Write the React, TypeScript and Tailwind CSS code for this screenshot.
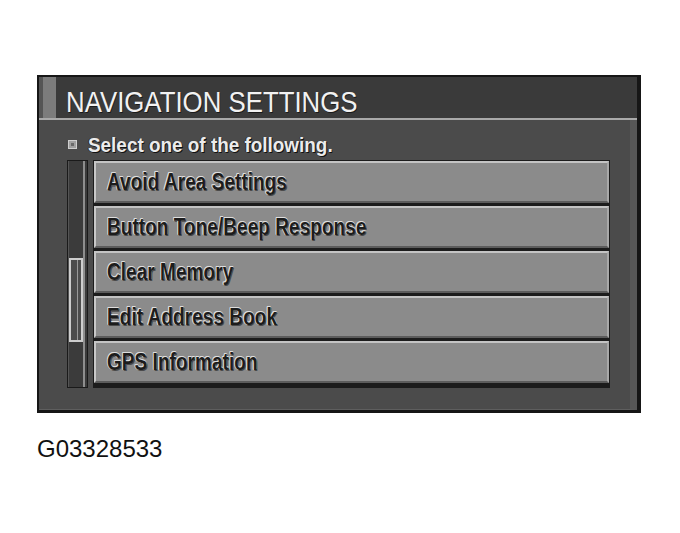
import React from 'react';

const items = [
  'Avoid Area Settings',
  'Button Tone/Beep Response',
  'Clear Memory',
  'Edit Address Book',
  'GPS Information',
];

// dark label with a light emboss edge, as drawn on the head unit
const embossed =
  '[text-shadow:-1px_-1px_0_#dedede,-1px_0_0_#dedede,0_-1px_0_#dedede,1px_1px_0_#4a4a4a]';

const MenuButton = ({ label }: { label: string }) => (
  <div className="h-[42px] flex items-center bg-[#8b8b8b] border-t-2 border-l-2 border-t-[#c4c4c4] border-l-[#c8c8c8] border-b-2 border-r-2 border-b-[#5c5c5c] border-r-[#a8a8a8] pl-[11px]">
    <span
      className={`inline-block origin-left scale-x-[0.83] text-[23px] leading-none font-bold text-[#1c1c1c] whitespace-nowrap ${embossed}`}
      style={{ fontFamily: '"Liberation Sans", Arial, sans-serif' }}
    >
      {label}
    </span>
  </div>
);

const ScrollTrack = () => (
  <div className="w-[21px] h-full border border-[#1a1a1a] bg-[#3b3b3b] flex">
    <div className="flex-1 flex flex-col border-l border-l-[#555] border-r-2 border-r-[#8e8e8e] mr-[2px]">
      <div className="h-[97px]" />
      {/* thumb */}
      <div className="h-[84px] border-2 border-[#cdcdcd] bg-[#4c4c4c] flex justify-end">
        <div className="w-px h-full bg-[#9a9a9a] mr-[3px]" />
      </div>
    </div>
  </div>
);

export default function App() {
  return (
    <div
      className="w-[680px] h-[533px] bg-white pt-[75px] pl-[37px]"
      style={{ fontFamily: '"Liberation Sans", Arial, sans-serif' }}
    >
      <div className="w-[604px] h-[338px] flex flex-col border-l-2 border-t-2 border-r-4 border-b-[3px] border-[#161616] bg-[#4a4a4a]">
        {/* title bar */}
        <div className="h-[43px] shrink-0 flex bg-[#3a3a3a] border-b-2 border-b-[#a9a9a9]">
          <div className="w-[17px] h-full flex">
            <div className="w-[4px] bg-[#555]" />
            <div className="flex-1 bg-[#7c7c7c]" />
          </div>
          <div className="pl-[10px] pt-[10px]">
            <span className="inline-block origin-left scale-x-[0.86] text-[30px] leading-none text-[#f2f2f2] whitespace-nowrap [text-shadow:1px_1px_0_#1a1a1a]">
              NAVIGATION SETTINGS
            </span>
          </div>
        </div>

        {/* body */}
        <div className="flex-1 flex flex-col pl-[28px] pr-[20px] pb-[21px] border-r-[7px] border-r-[#575757] border-b border-b-[#5e5e5e] bg-[#4b4b4b]">
          <div className="h-[40px] shrink-0 flex items-center pt-[9px]">
            <div className="w-[9px] h-[9px] ml-px bg-[#a0a0a0] border border-[#cfcfcf] flex items-center justify-center">
              <div className="w-[3px] h-[3px] bg-[#6a6a6a]" />
            </div>
            <span className="ml-[11px] inline-block origin-left scale-x-[0.9] text-[21px] leading-none font-bold text-[#ececec] whitespace-nowrap [text-shadow:1px_1px_0_#111,-1px_0_0_#2a2a2a]">
              Select one of the following.
            </span>
          </div>

          <div className="flex-1 flex gap-[5px]">
            <ScrollTrack />
            <div className="flex-1 flex flex-col gap-[3px] bg-[#1c1c1c] p-[1px]">
              {items.map((label) => (
                <MenuButton key={label} label={label} />
              ))}
            </div>
          </div>
        </div>
      </div>

      <div className="mt-[24px] text-[24px] leading-none text-[#111]">G03328533</div>
    </div>
  );
}
